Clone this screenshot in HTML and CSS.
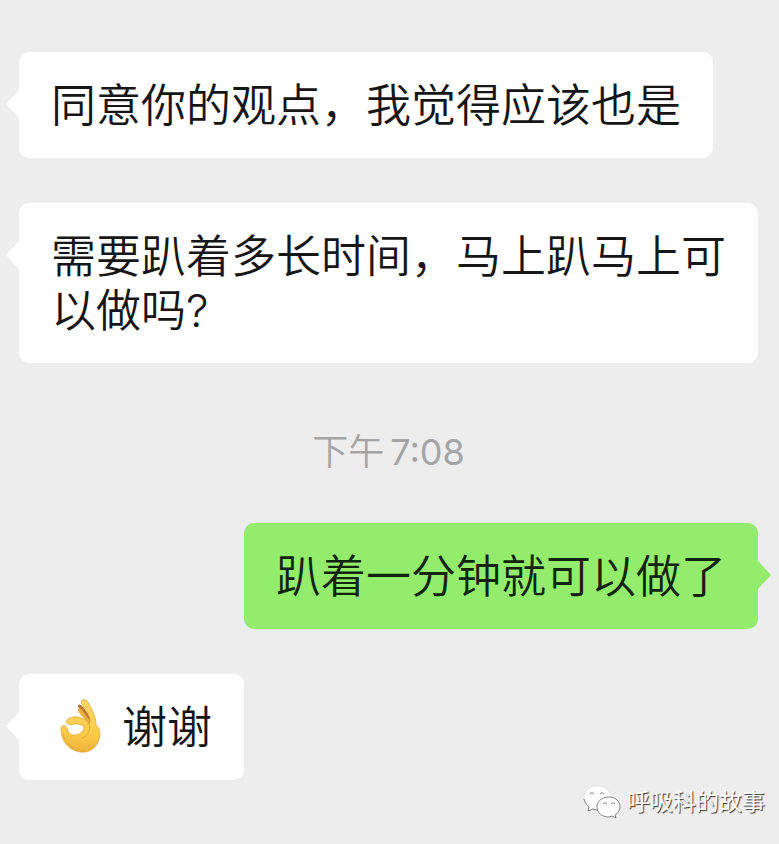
FILE: index.html
```html
<!DOCTYPE html>
<html lang="zh-CN">
<head>
    <meta charset="UTF-8">
    <meta name="viewport" content="width=device-width, initial-scale=1.0">
    <title>聊天记录</title>
    <link rel="stylesheet" href="styles.css">
</head>
<body>

    <main class="chat">
        <div class="message left">同意你的观点，我觉得应该也是</div>
        <div class="message left">需要趴着多长时间，马上趴马上可以做吗?</div>
        <time class="time">下午<span>7:08</span></time>
        <div class="message right">趴着一分钟就可以做了</div>
        <div class="message left with-emoji">
            <svg class="emoji" viewBox="0 3 60 70" role="img" aria-label="OK">
                <defs>
                    <linearGradient id="skin" x1="0" y1="0" x2="0" y2="1">
                        <stop offset="0" stop-color="#fbd768"/>
                        <stop offset="0.65" stop-color="#fbcb48"/>
                        <stop offset="1" stop-color="#efb038"/>
                    </linearGradient>
                </defs>
                <path d="M28 18C25 14 29 13 32 17L41 29L39 37L36 34C35 28 31 24 28 18Z" fill="#b5762c"/>
                <path d="M27 21C26 17 29 17 32 21L39 31L37 36L35 32C34 28 29 25 27 21Z" fill="#e9ae3d"/>
                <path fill="url(#skin)" stroke="#d9a037" stroke-width="0.7" d="M31 14C28 9 35 8 37 12C41 20 45 26 45 35C50 39 50 47 46 54C42 61 34 64 25 61C15 58 10 48 10 39C10 35 14 34 16 38C17 42 19 45 23 45C28 45 32 42 33 38C33 35 28 34 25 34C21 34 18 36 16 33C14 30 18 28 22 27C29 26 35 29 38 34L39 31C39 25 34 20 31 14Z"/>
                <path d="M38 34C40 40 37 46 31 48M12 43C14 53 21 59 29 60" fill="none" stroke="#e2a838" stroke-width="1"/>
            </svg>
            <span>谢谢</span>
        </div>
    </main>

    <div class="watermark">
        <svg class="logo" viewBox="0 0 38 34" aria-hidden="true">
            <path d="M14 1C6 1 1 6 1 13C1 17 3 20 6 22L5 26L10 24C12 25 14 25 17 25C24 25 28 20 28 13C28 6 22 1 14 1Z" fill="#fff" stroke="#d2d2d2" stroke-width="0.5"/>
            <path d="M1 14C2 18 4 20 6 22L5 26L10 24L14 25M7 9Q9 6 11 9M17 9Q19 6 21 9" fill="none" stroke="#777" stroke-width="0.9"/>
            <path d="M26 12C18 12 14 17 14 22C14 28 19 32 26 32L29 31L33 33L32 30C35 28 37 25 37 22C37 16 32 12 26 12Z" fill="#fff" stroke="#777" stroke-width="0.9"/>
            <path d="M20 19Q22 16 24 19M28 19Q30 16 32 19" fill="none" stroke="#777" stroke-width="0.9"/>
        </svg>
        <span>呼吸科的故事</span>
    </div>

</body>
</html>
```

FILE: styles.css
```css
* {
    margin: 0;
    padding: 0;
    box-sizing: border-box;
}
body {
    background-color: #ededee;
    font-family: Inter, "Noto Sans CJK SC", sans-serif;
    color: #161616;
}
.chat {
    display: flex;
    flex-direction: column;
    align-items: flex-start;
    gap: 45px;
    padding: 52px 21px 64px 19px;
}
.message {
    position: relative;
    padding: 27px 32px 25px;
    border-radius: 10px;
    font-size: 45px;
    font-weight: 350;
    line-height: 54px;
}
.left {
    background-color: white;
}
.right {
    align-self: flex-end;
    background-color: #93ec6c;
    color: #10240b;
}
/* bubble tails */
.message::before {
    content: "";
    position: absolute;
    top: 38px;
    width: 13px;
    height: 28px;
    background-color: inherit;
}
.left::before {
    left: -13px;
    clip-path: polygon(100% 0, 0 50%, 100% 100%);
}
.right::before {
    right: -13px;
    clip-path: polygon(0 0, 100% 50%, 0 100%);
}
.time {
    display: flex;
    gap: 6px;
    align-self: center;
    margin: 22px 0 3px;
    color: #a4a4a5;
    font-size: 36px;
    font-weight: 350;
    line-height: 45px;
}
.time span {
    font-weight: 400;
}
.with-emoji {
    display: flex;
    align-items: center;
    gap: 11px;
}
.emoji {
    width: 60px;
    height: 70px;
    margin: -8px 0;
}
.watermark {
    position: absolute;
    right: 14px;
    bottom: 25px;
    display: flex;
    align-items: center;
    gap: 6px;
    color: white;
    font-size: 23px;
    line-height: 34px;
    text-shadow: 1px 1px 1px #333;
}
.logo {
    width: 38px;
    height: 34px;
}
```
